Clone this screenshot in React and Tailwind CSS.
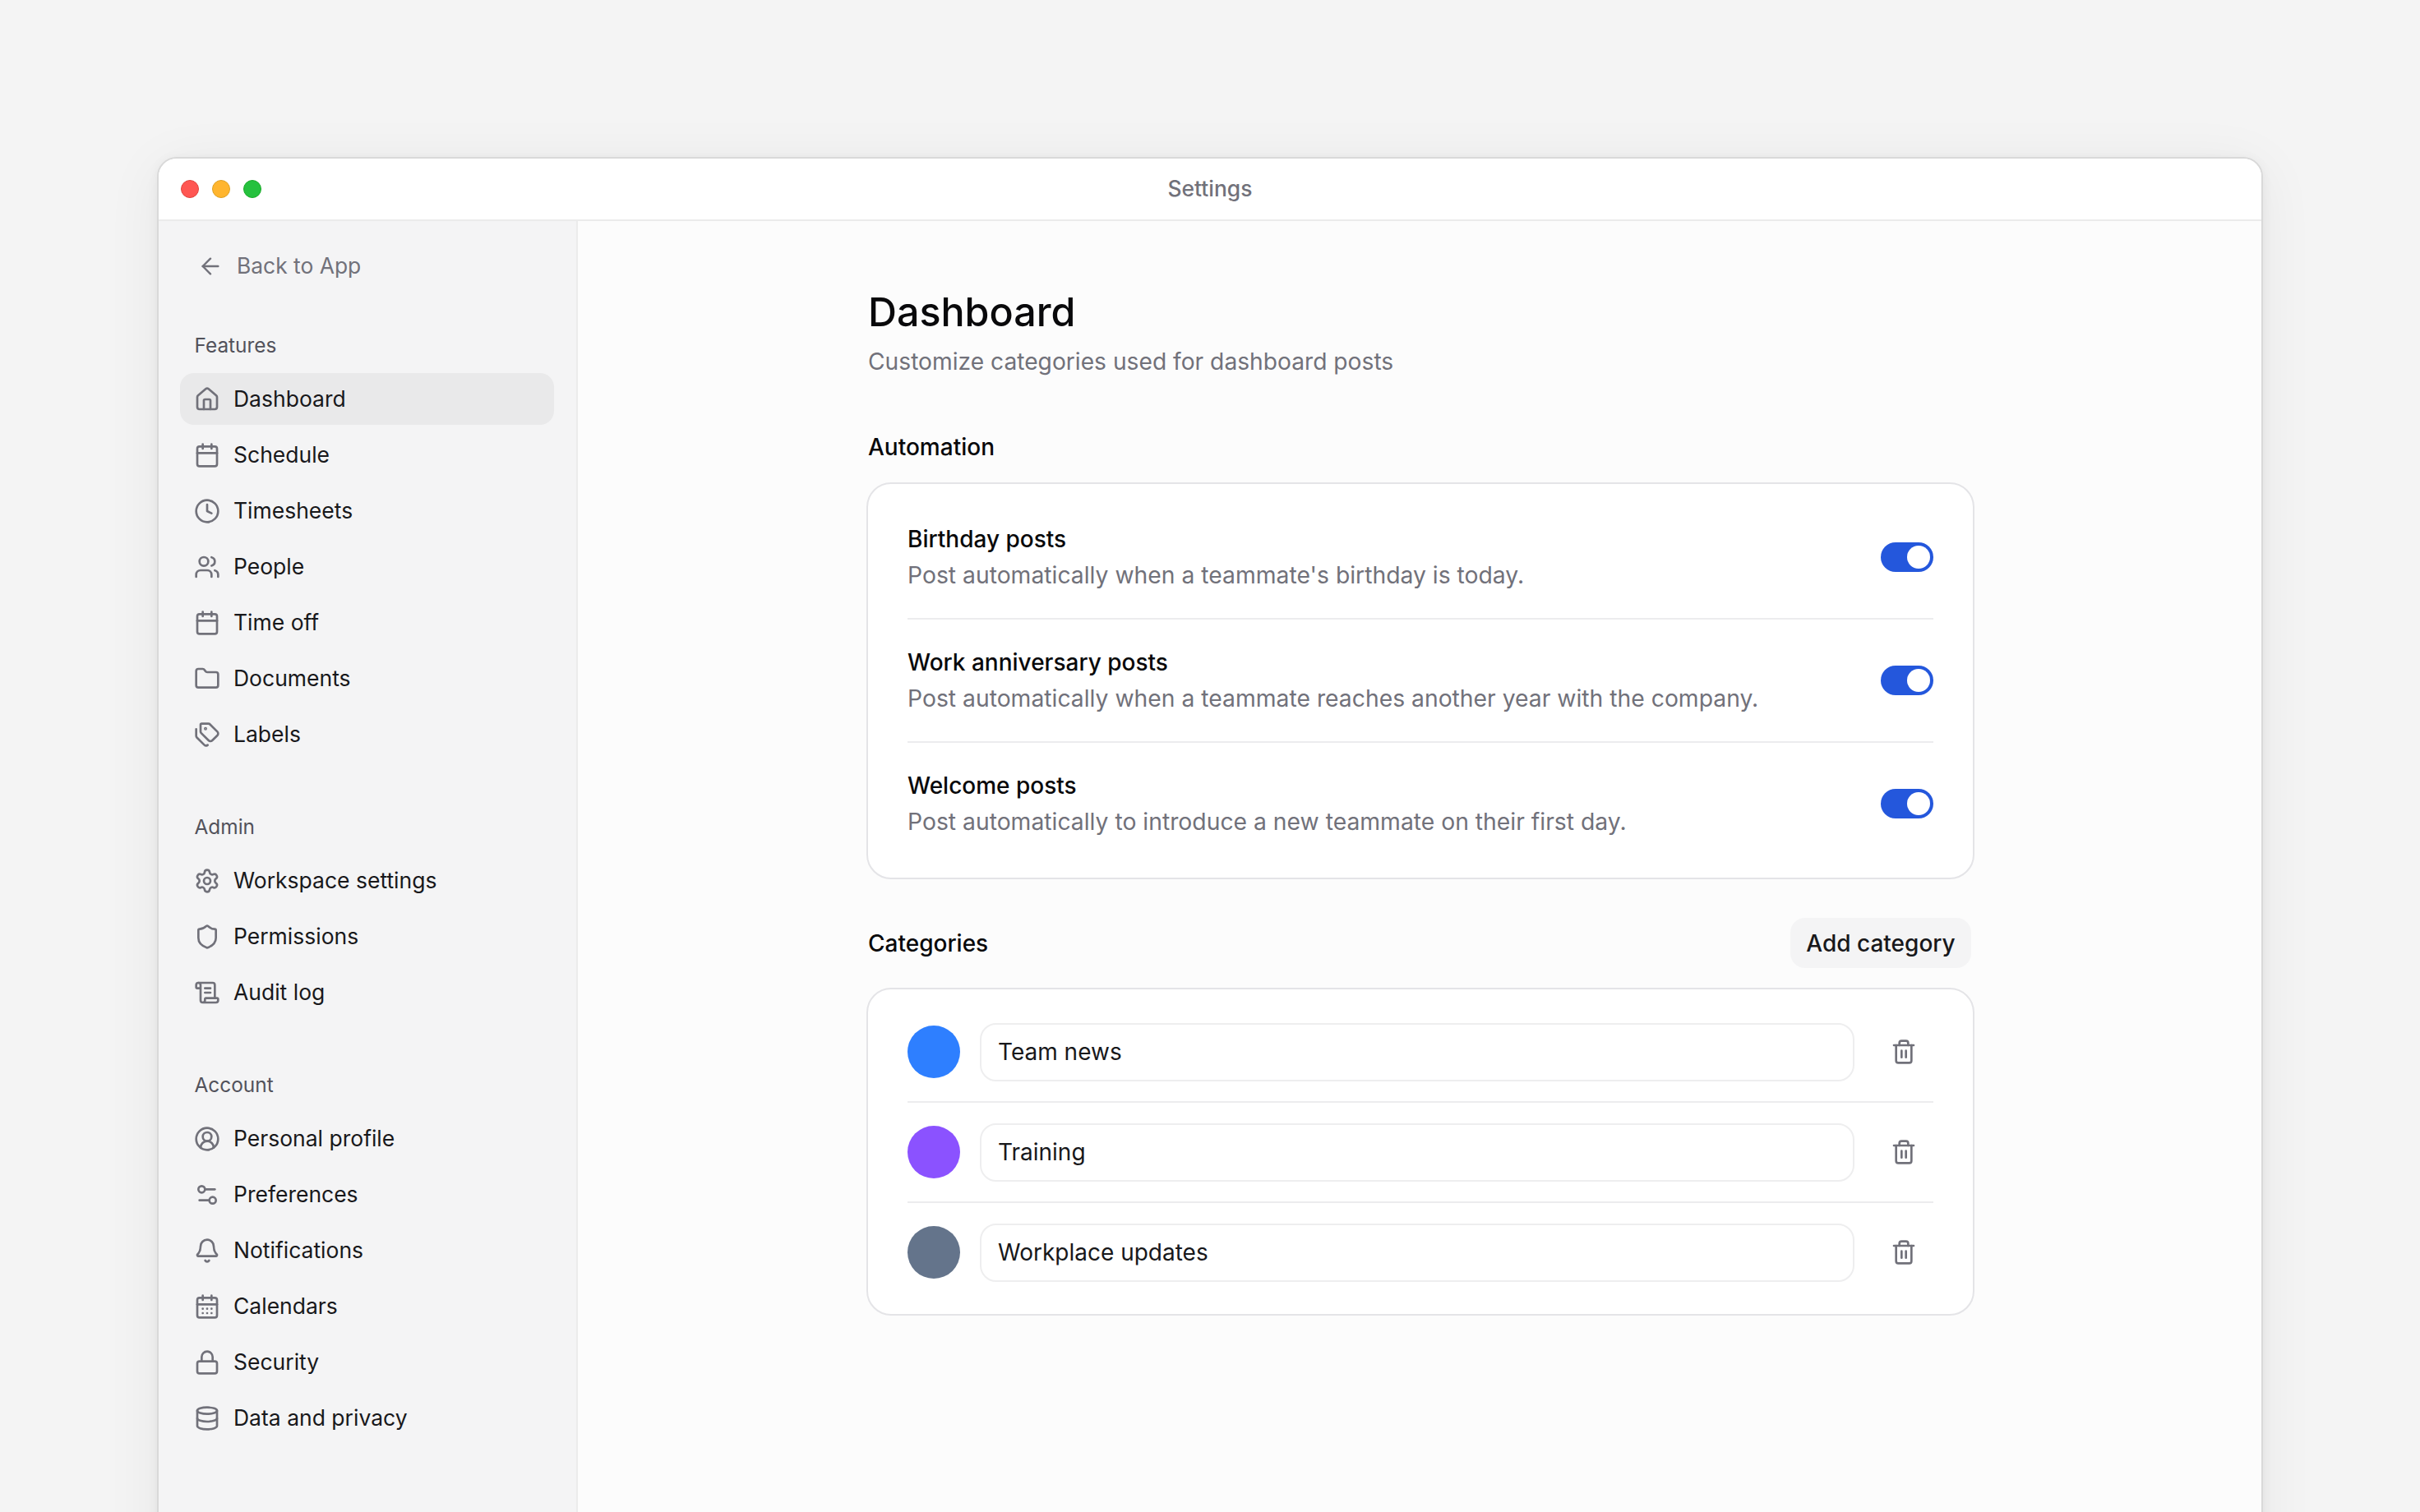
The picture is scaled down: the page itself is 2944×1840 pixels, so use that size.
import {
  ArrowLeft,
  Bell,
  Calendar,
  CalendarDays,
  CircleUserRound,
  Clock,
  Database,
  Folder,
  House,
  Lock,
  ScrollText,
  Settings,
  Settings2,
  Shield,
  Tags,
  Trash2,
  Users,
} from "lucide-react";

const sidebarGroups = [
  {
    label: "Features",
    items: [
      { name: "Dashboard", icon: House, active: true },
      { name: "Schedule", icon: Calendar },
      { name: "Timesheets", icon: Clock },
      { name: "People", icon: Users },
      { name: "Time off", icon: Calendar },
      { name: "Documents", icon: Folder },
      { name: "Labels", icon: Tags },
    ],
  },
  {
    label: "Admin",
    items: [
      { name: "Workspace settings", icon: Settings },
      { name: "Permissions", icon: Shield },
      { name: "Audit log", icon: ScrollText },
    ],
  },
  {
    label: "Account",
    items: [
      { name: "Personal profile", icon: CircleUserRound },
      { name: "Preferences", icon: Settings2 },
      { name: "Notifications", icon: Bell },
      { name: "Calendars", icon: CalendarDays },
      { name: "Security", icon: Lock },
      { name: "Data and privacy", icon: Database },
    ],
  },
];

const automations = [
  {
    title: "Birthday posts",
    text: "Post automatically when a teammate's birthday is today.",
  },
  {
    title: "Work anniversary posts",
    text: "Post automatically when a teammate reaches another year with the company.",
  },
  {
    title: "Welcome posts",
    text: "Post automatically to introduce a new teammate on their first day.",
  },
];

const categories = [
  { name: "Team news", dot: "bg-[#2e7fff]" },
  { name: "Training", dot: "bg-[#8b52ff]" },
  { name: "Workplace updates", dot: "bg-[#64748b]" },
];

function SidebarGroup({ group }) {
  return (
    <div className="mt-[65px] first:mt-[55px]">
      <div className="pl-[17.5px] h-[32px] leading-[32px] text-[24.4px] text-[#52525b]">
        {group.label}
      </div>
      <div className="mt-[18px] flex flex-col gap-[5px]">
        {group.items.map((item) => {
          const Icon = item.icon;
          return (
            <div
              key={item.name}
              className={`flex h-[63px] items-center gap-[16px] rounded-[17px] pl-[17px] text-[26.5px] text-[#18181b] ${
                item.active ? "bg-[#e9e9ea]" : ""
              }`}
            >
              <Icon size={32} strokeWidth={2} className="shrink-0 text-[#71717a]" />
              {item.name}
            </div>
          );
        })}
      </div>
    </div>
  );
}

function Toggle() {
  return (
    <div className="flex h-[36px] w-[64px] shrink-0 items-center justify-end rounded-full bg-[#2457dc] pr-[4px]">
      <div className="h-[28px] w-[28px] rounded-full bg-white" />
    </div>
  );
}

export default function App() {
  return (
    <div
      className="h-[1840px] overflow-hidden bg-[#f4f4f4] pl-[191px] pt-[191px]"
      style={{ fontFamily: "Inter, sans-serif" }}
    >
      <div className="flex h-[1760px] w-[2562px] flex-col overflow-hidden rounded-t-[24px] border-2 border-[#d9d9d9] bg-white shadow-[0_2px_14px_rgba(0,0,0,0.05),0_10px_70px_rgba(0,0,0,0.06)]">
        {/* Title bar */}
        <div className="grid h-[76px] shrink-0 grid-cols-[1fr_auto_1fr] items-center border-b-2 border-[#ebebeb] bg-white">
          <div className="flex gap-[16px] pl-[27px]">
            <div className="h-[22px] w-[22px] rounded-full border border-[#e0443e] bg-[#ff5652]" />
            <div className="h-[22px] w-[22px] rounded-full border border-[#dea123] bg-[#ffb52e]" />
            <div className="h-[22px] w-[22px] rounded-full border border-[#1aab29] bg-[#25c13e]" />
          </div>
          <div className="text-[26.4px] font-medium text-[#71717a]">Settings</div>
          <div />
        </div>

        <div className="flex min-h-0 flex-1">
          {/* Sidebar */}
          <div className="w-[510px] shrink-0 border-r-2 border-[#ebebeb] bg-[#f4f4f5] pl-[26px] pr-[27px] pt-[30px]">
            <div className="flex h-[50px] items-center gap-[16px] pl-[21px] text-[26.4px] text-[#71717a]">
              <ArrowLeft size={32} strokeWidth={1.8} className="shrink-0" />
              Back to App
            </div>
            <div>
              {sidebarGroups.map((group) => (
                <SidebarGroup key={group.label} group={group} />
              ))}
            </div>
          </div>

          {/* Main */}
          <div className="min-w-0 flex-1 bg-[#fcfcfc] pl-[2px] pt-[79px]">
            <div className="mx-auto w-[1348px]">
              <h1 className="pl-[2px] text-[48.4px] font-medium leading-[64px] text-[#09090b]">Dashboard</h1>
              <p className="mt-[8px] pl-[2px] text-[28.2px] leading-[40px] text-[#71717a]">
                Customize categories used for dashboard posts
              </p>

              <h2 className="mt-[64px] pl-[2px] text-[28px] font-[450] leading-[40px] text-[#09090b]">
                Automation
              </h2>
              <div className="mt-[23px] rounded-[30px] border-2 border-[#e4e4e7] bg-white px-[48px] pb-[16px] pt-[15px]">
                {automations.map((row) => (
                  <div
                    key={row.title}
                    className="flex h-[150px] items-center justify-between border-b-2 border-[#ececee] last:h-[148px] last:border-b-0"
                  >
                    <div>
                      <div className="text-[28px] font-[450] leading-[40px] text-[#09090b]">
                        {row.title}
                      </div>
                      <div className="mt-[4px] text-[28.3px] leading-[40px] text-[#71717a]">
                        {row.text}
                      </div>
                    </div>
                    <Toggle />
                  </div>
                ))}
              </div>

              <div className="mt-[47px] flex items-center justify-between pr-[4px]">
                <h2 className="pl-[2px] text-[28px] font-[450] leading-[40px] text-[#09090b]">Categories</h2>
                <button className="h-[61px] w-[220px] rounded-[18px] bg-[#f4f4f5] text-center text-[28px] font-[450] text-[#18181b]">
                  Add category
                </button>
              </div>

              <div className="mt-[24px] rounded-[30px] border-2 border-[#e4e4e7] bg-white px-[48px] pb-[15px] pt-[16px]">
                {categories.map((cat) => (
                  <div
                    key={cat.name}
                    className="flex h-[122px] items-center border-b-2 border-[#ececee] last:h-[120px] last:border-b-0"
                  >
                    <div className={`h-[64px] w-[64px] shrink-0 rounded-full ${cat.dot}`} />
                    <div className="ml-[24px] flex h-[71px] w-[1064px] items-center rounded-[20px] border-2 border-[#eeeeef] bg-white pl-[20px] text-[28px] text-[#18181b]">
                      {cat.name}
                    </div>
                    <div className="flex flex-1 justify-end pr-[20px]">
                      <Trash2 size={32} strokeWidth={2} className="text-[#71717a]" />
                    </div>
                  </div>
                ))}
              </div>
            </div>
          </div>
        </div>
      </div>
    </div>
  );
}
